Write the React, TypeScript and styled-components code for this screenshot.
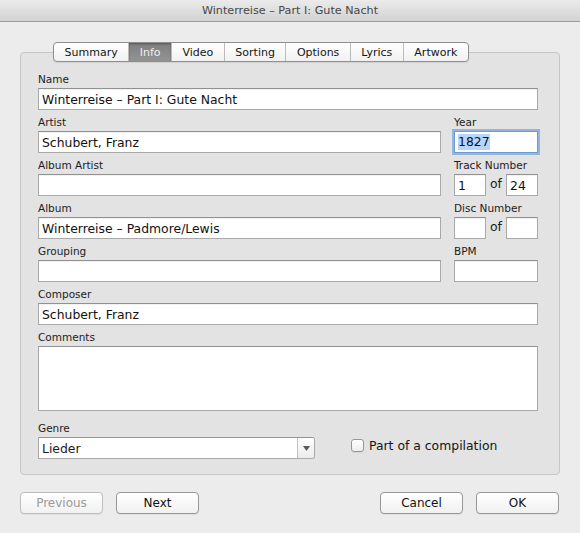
import React from 'react'
import styled, { createGlobalStyle } from 'styled-components'

const GlobalStyle = createGlobalStyle`
  html, body {
    margin: 0;
    padding: 0;
    background: #ececec;
  }
  body {
    font-family: "DejaVu Sans", "Noto Sans", sans-serif;
    color: #1a1a1a;
  }
`

const tabs = ['Summary', 'Info', 'Video', 'Sorting', 'Options', 'Lyrics', 'Artwork']

export default function App() {
  return (
    <Window>
      <GlobalStyle />
      <TitleBar>Winterreise – Part I: Gute Nacht</TitleBar>
      <Body>
        <TabBar>
          {tabs.map(t => (
            <Tab key={t} $active={t === 'Info'}>
              {t}
            </Tab>
          ))}
        </TabBar>
        <Panel>
          <FieldGrid>
            <Field $span>
              <Label>Name</Label>
              <TextBox>Winterreise – Part I: Gute Nacht</TextBox>
            </Field>
            <Field>
              <Label>Artist</Label>
              <TextBox>Schubert, Franz</TextBox>
            </Field>
            <Field>
              <Label>Year</Label>
              <TextBox $focused>
                <Selection>1827</Selection>
              </TextBox>
            </Field>
            <Field>
              <Label>Album Artist</Label>
              <TextBox />
            </Field>
            <Field>
              <Label>Track Number</Label>
              <PairRow>
                <PairBox>1</PairBox>
                <Of>of</Of>
                <PairBox>24</PairBox>
              </PairRow>
            </Field>
            <Field>
              <Label>Album</Label>
              <TextBox>Winterreise – Padmore/Lewis</TextBox>
            </Field>
            <Field>
              <Label>Disc Number</Label>
              <PairRow>
                <PairBox />
                <Of>of</Of>
                <PairBox />
              </PairRow>
            </Field>
            <Field>
              <Label>Grouping</Label>
              <TextBox />
            </Field>
            <Field>
              <Label>BPM</Label>
              <TextBox />
            </Field>
            <Field $span>
              <Label>Composer</Label>
              <TextBox>Schubert, Franz</TextBox>
            </Field>
            <Field $span>
              <Label>Comments</Label>
              <TextArea />
            </Field>
          </FieldGrid>
          <GenreRow>
            <GenreField>
              <Label>Genre</Label>
              <Select>
                <SelectValue>Lieder</SelectValue>
                <SelectArrow>
                  <svg width="7" height="5" viewBox="0 0 7 5">
                    <path d="M0 0 H7 L3.5 5 Z" fill="#5a5a5a" />
                  </svg>
                </SelectArrow>
              </Select>
            </GenreField>
            <CheckLabel>
              <CheckBox />
              Part of a compilation
            </CheckLabel>
          </GenreRow>
        </Panel>
        <ButtonRow>
          <Button $disabled>Previous</Button>
          <Button>Next</Button>
          <Spacer />
          <Button>Cancel</Button>
          <Button>OK</Button>
        </ButtonRow>
      </Body>
    </Window>
  )
}

const Window = styled.div`
  width: 580px;
  height: 533px;
  background: #ececec;
  display: flex;
  flex-direction: column;
  overflow: hidden;
`

const TitleBar = styled.div`
  height: 21px;
  flex: 0 0 auto;
  border-bottom: 1px solid #9c9c9c;
  background: linear-gradient(to bottom, #ebebeb, #d2d2d2);
  display: flex;
  align-items: center;
  justify-content: center;
  font-size: 11.2px;
  color: #474747;
`

const Body = styled.div`
  padding: 20px 20px 0 20px;
  display: flex;
  flex-direction: column;
`

const TabBar = styled.div`
  align-self: flex-start;
  margin-left: 33px;
  margin-bottom: -10px;
  position: relative;
  z-index: 1;
  display: flex;
  height: 18px;
  border: 1px solid #8f8f8f;
  border-radius: 4px;
  overflow: hidden;
  background: linear-gradient(to bottom, #ffffff, #f1f1f1);
  box-shadow: 0 1px 1px rgba(0, 0, 0, 0.08);
`

const Tab = styled.div<{ $active?: boolean }>`
  padding: 0 10.5px;
  display: flex;
  align-items: center;
  font-size: 11px;
  color: ${p => (p.$active ? '#efefef' : '#141414')};
  background: ${p =>
    p.$active ? 'linear-gradient(to bottom, #7e7e7e, #949494)' : 'transparent'};
  box-shadow: ${p => (p.$active ? 'inset 0 1px 2px rgba(0,0,0,0.35)' : 'none')};
  & + & {
    border-left: 1px solid #bcbcbc;
  }
`

const Panel = styled.div`
  background: #e3e3e3;
  border: 1px solid #c6c6c6;
  border-radius: 4px;
  padding: 20px 21px 15px 17px;
  display: flex;
  flex-direction: column;
`

const FieldGrid = styled.div`
  display: grid;
  grid-template-columns: 403px 84px;
  column-gap: 13px;
  row-gap: 6px;
`

const Field = styled.div<{ $span?: boolean }>`
  display: flex;
  flex-direction: column;
  grid-column: ${p => (p.$span ? '1 / span 2' : 'auto')};
`

const GenreField = styled(Field)`
  width: 277px;
`

const Label = styled.div`
  height: 15px;
  font-size: 10.5px;
  line-height: 12px;
  color: #1c1c1c;
`

const TextBox = styled.div<{ $focused?: boolean }>`
  height: 20px;
  min-width: 0;
  background: #fff;
  border: 1px solid ${p => (p.$focused ? '#6d9bd0' : '#a9a9a9')};
  border-top-color: ${p => (p.$focused ? '#6d9bd0' : '#919191')};
  box-shadow: ${p =>
    p.$focused
      ? '0 0 0 2px rgba(120, 165, 220, 0.75)'
      : 'inset 0 1px 0 rgba(0,0,0,0.05)'};
  padding: 0 3px;
  display: flex;
  align-items: center;
  font-size: 12.4px;
  color: #111;
  white-space: nowrap;
`

const PairBox = styled(TextBox)`
  flex: 1 1 0;
`

const Selection = styled.span`
  background: #b5d5fd;
  line-height: 16px;
`

const PairRow = styled.div`
  display: flex;
  align-items: center;
`

const Of = styled.span`
  width: 20px;
  text-align: center;
  font-size: 12.4px;
  margin-top: -3px;
`

const TextArea = styled.div`
  height: 63px;
  background: #fff;
  border: 1px solid #a9a9a9;
  border-top-color: #919191;
`

const GenreRow = styled.div`
  margin-top: 11px;
  display: flex;
  align-items: flex-end;
`

const Select = styled.div`
  height: 20px;
  display: flex;
  background: #fff;
  border: 1px solid #a9a9a9;
  border-top-color: #939393;
  border-radius: 0 3px 3px 0;
`

const SelectValue = styled.div`
  flex: 1;
  padding: 0 3px;
  display: flex;
  align-items: center;
  font-size: 12.4px;
`

const SelectArrow = styled.div`
  width: 16px;
  border-left: 1px solid #c2c2c2;
  background: linear-gradient(to bottom, #ffffff, #ececec);
  border-radius: 0 3px 3px 0;
  display: flex;
  align-items: center;
  justify-content: center;
`

const CheckLabel = styled.label`
  margin-left: 36px;
  height: 22px;
  display: flex;
  align-items: center;
  gap: 5px;
  font-size: 12.4px;
  color: #141414;
  margin-bottom: 3px;
`

const CheckBox = styled.span`
  width: 11px;
  height: 11px;
  border: 1px solid #979797;
  border-radius: 3px;
  background: linear-gradient(to bottom, #ffffff, #eeeeee);
  box-shadow: 0 1px 0 rgba(0, 0, 0, 0.06);
`

const ButtonRow = styled.div`
  margin-top: 17px;
  display: flex;
  gap: 13px;
  padding-right: 1px;
`

const Spacer = styled.div`
  flex: 1;
`

const Button = styled.div<{ $disabled?: boolean }>`
  width: 81px;
  height: 20px;
  border: 1px solid ${p => (p.$disabled ? '#bdbdbd' : '#979797')};
  border-radius: 4px;
  background: linear-gradient(to bottom, #ffffff, #f1f1f1);
  box-shadow: 0 1px 0 rgba(0, 0, 0, 0.05);
  display: flex;
  align-items: center;
  justify-content: center;
  font-size: 12px;
  color: ${p => (p.$disabled ? '#9a9a9a' : '#111')};
`
